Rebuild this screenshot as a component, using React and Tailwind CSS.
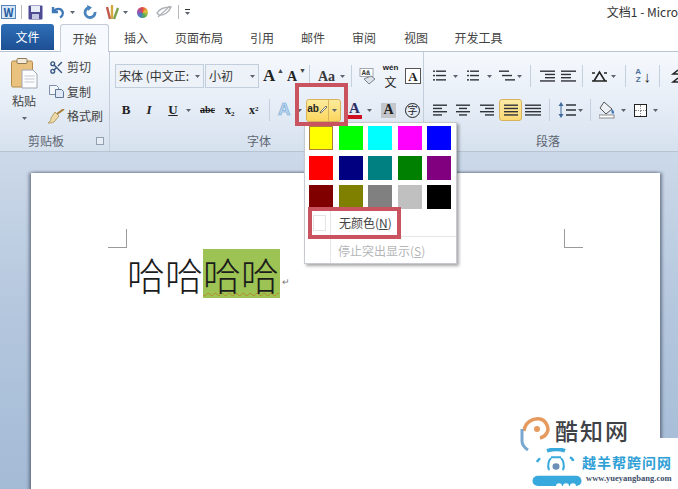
import React from 'react';
import { Scissors } from 'lucide-react';

const Caret = ({ className = '' }) => (
    <svg width="5" height="3" viewBox="0 0 5 3" className={'shrink-0 ' + className}>
        <path d="M0 0h5L2.5 3z" fill="#5b6470" />
    </svg>
);

const Sep = ({ h = 'h-[22px]', className = '' }) => <div className={'w-px shrink-0 bg-[#c5d0de] ' + h + ' ' + className} />;

// Horizontal text lines, used for the paragraph icons
const Lines = ({ rows, w = 14, h = 13 }) => (
    <svg width={w} height={h} viewBox={`0 0 ${w} ${h}`} className="shrink-0">
        {rows.map((r, i) => (
            <rect key={i} x={r[0]} y={i * (h / rows.length) + 0.5} width={r[1]} height="1.4" fill="#30343a" />
        ))}
    </svg>
);

const colors = [
    '#ffff00', '#00ff00', '#00ffff', '#ff00ff', '#0000ff',
    '#ff0000', '#000080', '#008080', '#008000', '#800080',
    '#800000', '#808000', '#808080', '#c0c0c0', '#000000',
];

const tabs = [
    ['插入', 'ml-[15px] w-[24px]'],
    ['页面布局', 'ml-[28px] w-[46px]'],
    ['引用', 'ml-[29px] w-[22px]'],
    ['邮件', 'ml-[29px] w-[22px]'],
    ['审阅', 'ml-[29px] w-[22px]'],
    ['视图', 'ml-[29px] w-[24px]'],
    ['开发工具', 'ml-[27px] w-[47px]'],
];

const QuickAccess = () => (
    <div className="flex h-[24px] shrink-0 items-center bg-white pl-[1px]">
        <div className="flex h-[14px] w-[15px] items-center justify-center border border-[#5d86b8] bg-[#d7e6f6] text-[11px] font-bold leading-none text-[#1f5aa0]">W</div>
        <div className="ml-[5px] h-[14px] w-px bg-[#b9b9b9]" />
        <svg width="15" height="15" viewBox="0 0 15 15" className="ml-[6px]">
            <rect x="0.5" y="0.5" width="14" height="14" rx="1" fill="#4f4a94" />
            <rect x="3" y="1" width="9" height="6" fill="#e8ecf5" />
            <rect x="4" y="9" width="7" height="5" fill="#c4c8de" />
        </svg>
        <svg width="15" height="14" viewBox="0 0 15 14" className="ml-[7px]">
            <path d="M3 2v5h5M3.5 6.5C6 3 11 3 12.5 6.5c1 2.5-.5 5-2.5 6" fill="none" stroke="#3f79b5" strokeWidth="2.4" />
        </svg>
        <Caret className="ml-[5px]" />
        <svg width="14" height="14" viewBox="0 0 14 14" className="ml-[8px]">
            <path d="M7 2.5A5 5 0 1 0 12 7" fill="none" stroke="#4a84bd" strokeWidth="2.8" />
            <path d="M4 0l5 2.5L5 6z" fill="#4a84bd" />
        </svg>
        <svg width="16" height="16" viewBox="0 0 16 16" className="ml-[7px]">
            <path d="M3 3l3 12" stroke="#c05a4a" strokeWidth="2.4" />
            <path d="M8 1v14" stroke="#d4a93f" strokeWidth="2.4" />
            <path d="M14 4l-4 11" stroke="#7fa34a" strokeWidth="2.4" />
        </svg>
        <Caret className="ml-[3px]" />
        <div className="ml-[9px] h-[11px] w-[11px] rounded-full bg-[conic-gradient(#e2483f,#e8c33c,#5fae4c,#3f7fc4,#a04fa8,#e2483f)]" />
        <svg width="16" height="14" viewBox="0 0 16 14" className="ml-[8px]">
            <path d="M1 8c3-5 9-6 14-6-2 5-7 9-12 8z" fill="none" stroke="#aeb2b6" strokeWidth="1.4" />
            <path d="M2 12L14 1" stroke="#aeb2b6" strokeWidth="1.2" />
        </svg>
        <div className="ml-[6px] h-[14px] w-px bg-[#b9b9b9]" />
        <div className="ml-[6px] flex flex-col items-center gap-[2px]">
            <div className="h-px w-[5px] bg-[#333]" />
            <Caret />
        </div>
        <span className="ml-auto whitespace-pre text-[12px] text-[#333]">文档1 - Micro</span>
    </div>
);

const TabStrip = () => (
    <div className="flex h-[27px] shrink-0 items-end bg-white text-[12px] text-[#444]">
        <div className="mb-[1px] ml-[1px] flex h-[26px] w-[53px] items-center justify-center rounded-t-[3px] bg-gradient-to-b from-[#2f6fb6] to-[#1d4f94] text-white">文件</div>
        <div className="relative z-10 -mb-[1px] ml-[6px] flex h-[28px] w-[49px] items-center justify-center rounded-t-[3px] border border-b-0 border-[#c3ccd8] bg-[#f6f9fd]">开始</div>
        {tabs.map(([label, cls]) => (
            <div key={label} className={'flex h-[26px] items-center justify-center whitespace-nowrap ' + cls}>{label}</div>
        ))}
    </div>
);

const SmallAction = ({ icon, label }) => (
    <div className="flex h-[24.5px] items-center">
        <div className="flex w-[17px] shrink-0 items-center justify-center">{icon}</div>
        <span className="ml-[2px] whitespace-nowrap text-[12px] text-[#444]">{label}</span>
    </div>
);

const Clipboard = () => (
    <div className="flex h-full w-[110px] shrink-0 flex-col border-r border-[#c3cedc]">
        <div className="flex h-[78px]">
            <div className="flex w-[48px] flex-col items-center pt-[6px]">
                <svg width="27" height="31" viewBox="0 0 27 31">
                    <rect x="0.5" y="3" width="21" height="26" rx="1.5" fill="#e9c27f" stroke="#b68a47" />
                    <rect x="6" y="0.5" width="10" height="5" rx="1" fill="#f4ead8" stroke="#8f7a58" />
                    <path d="M11 12h11l4 4v14H11z" fill="#fbfcfe" stroke="#a0a7b2" />
                    <path d="M13.500 18h10M13.500 21h10M13.500 24h10" stroke="#c3c8d0" />
                </svg>
                <span className="mt-[2px] text-[12px] leading-[20px] text-[#444]">粘贴</span>
                <Caret className="mt-[6px]" />
            </div>
            <div className="flex flex-col pt-[3px]">
                <SmallAction label="剪切" icon={<Scissors size={15} color="#35557f" strokeWidth={2.2} className="-scale-y-100" />} />
                <SmallAction label="复制" icon={
                    <svg width="15" height="13" viewBox="0 0 15 13">
                        <path d="M0.5 0.5h7l2 2v7h-9z" fill="#f2f5fa" stroke="#7d8ea6" />
                        <path d="M6.500 4.500h6l2 2v6h-8z" fill="#dfe8f4" stroke="#5e7698" />
                    </svg>
                } />
                <SmallAction label="格式刷" icon={
                    <svg width="17" height="15" viewBox="0 0 17 15">
                        <path d="M9 5L16 0" stroke="#a87f3a" strokeWidth="2" />
                        <path d="M7 3l4 4-5 6c-2 1-4 1-6 1 2-1 3-3 3-5z" fill="#ecd9a8" stroke="#a98d4e" strokeWidth="0.8" />
                    </svg>
                } />
            </div>
        </div>
        <div className="mt-auto flex h-[21px] items-center pl-[28px] pr-[5px]">
            <span className="text-[12px] text-[#5d6570]">剪贴板</span>
            <div className="ml-auto h-[8px] w-[8px] border border-[#94a0b0] bg-[#e7edf5]" />
        </div>
    </div>
);

const Select = ({ width, label, cls = '' }) => (
    <div className={'flex h-[24px] items-center border border-[#c3cedc] bg-[#edf2f8] px-[3px] ' + width + ' ' + cls}>
        <span className="flex-1 overflow-hidden whitespace-nowrap text-[12px] text-[#333]">{label}</span>
        <Caret />
    </div>
);

const FontGroup = () => (
    <div className="flex h-full w-[314px] shrink-0 flex-col border-r border-[#c3cedc] pl-[5px]">
        <div className="mt-[12px] flex h-[24px] items-center font-['Liberation_Serif','Noto_Sans_CJK_SC',serif]">
            <Select width="w-[89px]" label="宋体 (中文正:" cls="font-['Noto_Sans_CJK_SC',sans-serif]" />
            <Select width="w-[54px]" label="小初" cls="ml-px font-['Noto_Sans_CJK_SC',sans-serif]" />
            <span className="ml-[4px] w-[14px] text-[17px] font-bold text-[#222]">A</span>
            <span className="-mt-[9px] w-[4px] text-[7px] text-[#444]">▲</span>
            <span className="ml-[6px] w-[12px] text-[14px] font-bold text-[#222]">A</span>
            <span className="-mt-[9px] w-[4px] text-[7px] text-[#444]">▼</span>
            <Sep className="ml-[6px]" />
            <span className="ml-[8px] w-[20px] whitespace-nowrap text-[14px] font-bold text-[#3a3a3a]">Aa</span>
            <Caret className="ml-[2px]" />
            <Sep className="ml-[6px]" />
            <svg width="17" height="17" viewBox="0 0 17 17" className="ml-[7px]">
                <rect x="1" y="0.5" width="13" height="8" fill="#fff" stroke="#7d8694" strokeWidth="0.7" />
                <text x="2.500" y="7" fontSize="6.500" fontWeight="bold" fontFamily="Liberation Sans, sans-serif" fill="#333">Aā</text>
                <path d="M5 11l5 5 6-5-4-3z" fill="#dfe3e8" stroke="#79828f" />
            </svg>
            <div className="ml-[6px] flex w-[17px] flex-col items-center gap-[3px] text-[#222]">
                <span className="h-[8px] font-['Liberation_Sans',sans-serif] text-[8px] font-bold leading-[8px]">wén</span>
                <span className="h-[13px] font-['Noto_Sans_CJK_SC',sans-serif] text-[12px] leading-[13px]">文</span>
            </div>
            <div className="ml-[6px] flex h-[16px] w-[16px] items-center justify-center border border-[#555] bg-white text-[13px] font-bold leading-none text-[#222]">A</div>
        </div>
        <div className="mt-[10px] flex h-[24px] items-center font-['Liberation_Serif',serif] text-[#222]">
            <span className="ml-[6px] w-[10px] text-center text-[13px] font-bold">B</span>
            <span className="ml-[14px] w-[8px] text-center text-[13px] font-bold italic">I</span>
            <span className="ml-[15px] w-[10px] text-center text-[13px] font-bold underline">U</span>
            <Caret className="ml-[8px]" />
            <span className="ml-[8px] w-[17px] text-center text-[10px] font-bold leading-none line-through">abc</span>
            <span className="ml-[9px] w-[15px] text-[12px] font-bold">x<sub className="text-[7px]">2</sub></span>
            <span className="ml-[9px] w-[12px] text-[12px] font-bold">x<sup className="text-[7px]">2</sup></span>
            <Sep className="ml-[8px]" />
            <span className="ml-[8px] w-[16px] font-['Liberation_Sans',sans-serif] text-[17px] font-bold text-[#bcd6ee] [-webkit-text-stroke:0.6px_#6ea4d6]">A</span>
            <Caret className="ml-[3px]" />
            <div className="ml-[4px] flex h-[23px] w-[35px] rounded-[3px] border border-[#d9b35c] bg-gradient-to-b from-[#fdeb9b] to-[#fbd65c]">
                <div className="flex w-[22px] items-center justify-center border-r border-[#d9b35c]">
                    <span className="-mt-[3px] font-['Liberation_Sans',sans-serif] text-[10px] font-bold leading-none">ab</span>
                    <svg width="9" height="10" viewBox="0 0 9 10"><path d="M1 8l1-2 5-5 1 1-5 5z" fill="#fff" stroke="#444" strokeWidth="0.7" /></svg>
                </div>
                <div className="flex flex-1 items-center justify-center"><Caret /></div>
            </div>
            <div className="ml-[6px] flex w-[15px] flex-col items-center">
                <span className="text-[15px] font-bold leading-[14px] text-[#2b2f66]">A</span>
                <div className="h-[4px] w-[15px] bg-[#d01020]" />
            </div>
            <Caret className="ml-[5px]" />
            <div className="ml-[9px] flex h-[15px] w-[15px] items-center justify-center bg-[#c3c7cc] text-[14px] font-bold leading-none">A</div>
            <div className="ml-[9px] flex h-[15px] w-[15px] items-center justify-center rounded-full border border-[#222] font-['Noto_Sans_CJK_SC',sans-serif] text-[10px] leading-none">字</div>
        </div>
        <div className="mt-auto flex h-[21px] items-center justify-center pr-[20px]">
            <span className="font-['Noto_Sans_CJK_SC',sans-serif] text-[12px] text-[#5d6570]">字体</span>
        </div>
    </div>
);

const ParagraphGroup = () => (
    <div className="flex h-full flex-1 flex-col pl-[9px]">
        <div className="mt-[12px] flex h-[24px] items-center">
            <Lines rows={[[0, 2], [0, 2], [0, 2]]} w={3} h={13} />
            <Lines rows={[[0, 10], [0, 10], [0, 10]]} w={11} />
            <Caret className="ml-[6px]" />
            <div className="ml-[9px] flex"><Lines rows={[[0, 2], [0, 2], [0, 2]]} w={3} /><Lines rows={[[0, 9], [0, 9], [0, 9]]} w={10} /></div>
            <Caret className="ml-[7px]" />
            <div className="ml-[7px]"><Lines rows={[[0, 10], [3, 10], [6, 10]]} w={17} /></div>
            <Caret className="ml-[1px]" />
            <Sep className="ml-[8px]" />
            <div className="ml-[9px]"><Lines rows={[[0, 15], [5, 10], [5, 10], [0, 15]]} w={15} /></div>
            <div className="ml-[6px]"><Lines rows={[[0, 15], [0, 10], [0, 10], [0, 15]]} w={15} /></div>
            <Sep className="ml-[6px]" />
            <svg width="17" height="13" viewBox="0 0 17 13" className="ml-[8px]">
                <path d="M8.500 2L3 11h11zM1 11h15" fill="none" stroke="#222" strokeWidth="1.6" />
                <path d="M1 3h3M13 3h3" stroke="#222" strokeWidth="1.4" />
            </svg>
            <Caret className="ml-[3px]" />
            <Sep className="ml-[9px]" />
            <div className="ml-[8px] flex w-[17px] items-center">
                <div className="flex w-[9px] flex-col items-center font-['Liberation_Sans',sans-serif] text-[8px] font-bold leading-[8px] text-[#4d6f99]"><span>A</span><span>Z</span></div>
                <span className="ml-[1px] font-['Liberation_Sans',sans-serif] text-[15px] leading-none text-[#222]">↓</span>
            </div>
            <Sep className="ml-[8px]" />
            <svg width="10" height="15" viewBox="0 0 10 15" className="ml-[10px]">
                <path d="M8 1L3 5h7M8 9L3 13h7" fill="none" stroke="#222" strokeWidth="1.5" />
            </svg>
        </div>
        <div className="mt-[10px] flex h-[24px] items-center">
            <Lines rows={[[0, 14], [0, 9], [0, 14], [0, 9]]} />
            <div className="ml-[9px]"><Lines rows={[[0, 14], [3, 8], [0, 14], [3, 8]]} /></div>
            <div className="ml-[10px]"><Lines rows={[[0, 14], [5, 9], [0, 14], [5, 9]]} /></div>
            <div className="ml-[5px] flex h-[22px] w-[23px] items-center justify-center rounded-[3px] border border-[#d9b35c] bg-gradient-to-b from-[#fdeaa5] to-[#fbd972]">
                <Lines rows={[[0, 14], [0, 14], [0, 14], [0, 14]]} />
            </div>
            <div className="ml-[3px]"><Lines rows={[[0, 16], [0, 16], [0, 16], [0, 16]]} w={16} /></div>
            <Sep className="ml-[8px]" />
            <svg width="18" height="16" viewBox="0 0 18 16" className="ml-[8px]">
                <path d="M3 0L0.500 4h5zM3 16L0.500 12h5z" fill="#3f6a9c" />
                <path d="M3 4v8" stroke="#3f6a9c" />
                <path d="M8 3h10M8 8h10M8 13h10" stroke="#30343a" strokeWidth="1.4" />
            </svg>
            <Caret className="ml-[2px]" />
            <Sep className="ml-[7px]" />
            <svg width="16" height="18" viewBox="0 0 16 18" className="ml-[8px]">
                <path d="M5 1l8 7-6 5-6-6z" fill="#eef2f7" stroke="#555" />
                <path d="M13 8c2 2 3 4 1 5-2-1-2-3-1-5z" fill="#3f79b5" />
                <rect x="0" y="14" width="15" height="3" fill="#fff" stroke="#8b8b8b" />
            </svg>
            <Caret className="ml-[6px]" />
            <div className="ml-[8px] grid h-[13px] w-[13px] grid-cols-2 border-[1.5px] border-[#222] bg-white">
                <div className="border-b border-r border-dotted border-[#888]" />
                <div className="border-b border-dotted border-[#888]" />
                <div className="border-r border-dotted border-[#888]" />
            </div>
            <Caret className="ml-[6px]" />
        </div>
        <div className="mt-auto flex h-[21px] items-center pl-[103px]">
            <span className="text-[12px] text-[#5d6570]">段落</span>
        </div>
    </div>
);

const HighlightMenu = () => (
    <div className="absolute left-[304px] top-[122px] z-20 h-[142px] w-[153px] border border-[#c6c9cd] bg-white shadow-[2px_2px_3px_rgba(0,0,0,0.35)]">
        <div className="grid grid-cols-[repeat(5,24px)] gap-x-[5.5px] gap-y-[5.5px] pl-[4px] pt-[3px]">
            {colors.map((c, i) => (
                <div key={c} className={'h-[24px] w-[24px] ' + (i === 0 ? 'border border-[#a8803a]' : '')} style={{ backgroundColor: c }} />
            ))}
        </div>
        <div className="absolute bottom-0 left-[25px] top-[86px] w-px bg-[#e4e6e8]" />
        <div className="flex h-[27px] items-center">
            <div className="ml-[8px] h-[16px] w-[13px] border border-[#e2e4e6] bg-white" />
            <span className="ml-[13px] whitespace-nowrap text-[12px] text-[#444]">无颜色(<span className="underline">N</span>)</span>
        </div>
        <div className="ml-[26px] h-px bg-[#e4e6e8]" />
        <div className="flex h-[27px] items-center pl-[33px]">
            <span className="whitespace-nowrap text-[12px] text-[#b4b6b8]">停止突出显示(<span className="underline">S</span>)</span>
        </div>
    </div>
);

const Watermark = () => (
    <>
        <div className="absolute bottom-0 right-0 h-[51px] w-[148px] bg-white" />
        <svg width="34" height="36" viewBox="0 0 34 36" className="absolute left-[518px] top-[416px]">
            <path d="M6 15C7 6 15 2 22 3c5 1 8 6 8 11-1 4-4 7-8 8" fill="none" stroke="#e69a5e" strokeWidth="3.5" />
            <circle cx="19" cy="13" r="3" fill="#e69a5e" />
            <path d="M4 13v12c0 4 3 7 6 9" fill="none" stroke="#7aa7cf" strokeWidth="3" />
        </svg>
        <span className="absolute left-[555px] top-[414px] whitespace-nowrap text-[23px] font-medium leading-[32px] tracking-[2px] text-[#3f4247]">酷知网</span>
        <svg width="50" height="39" viewBox="0 0 50 42" preserveAspectRatio="none" className="absolute left-[532px] top-[448px]">
            <path d="M15 3c6-2 13-2 18 0" fill="none" stroke="#38a9dc" strokeWidth="4" />
            <path d="M8 11c-1 1-2 2-3 4M38 10c2 1 3 3 3 4" fill="none" stroke="#38a9dc" strokeWidth="2.500" />
            <path d="M17 24c-2-6 0-11 2-13M31 24c2-6 0-11-2-13M19 10h10" fill="none" stroke="#38a9dc" strokeWidth="2" />
            <circle cx="24" cy="20" r="3.500" fill="#6c8fb7" />
            <path d="M6 41a5.500 5.500 0 0 1 0-11h38a5.500 5.500 0 0 1 0 11z" fill="#38a9dc" />
            <circle cx="27" cy="41" r="3" fill="#fff" />
            <circle cx="34" cy="41" r="3" fill="#fff" />
            <circle cx="41" cy="41" r="3" fill="#fff" />
        </svg>
        <span className="absolute left-[582px] top-[452px] whitespace-nowrap text-[14px] font-bold leading-[20px] tracking-[1px] text-[#2f9fd6]">越羊帮跨问网</span>
        <span className="absolute left-[586px] top-[472px] whitespace-nowrap font-['Liberation_Serif',serif] text-[8.5px] font-bold leading-[12px] text-[#3e4f6b]">www.yueyangbang.com</span>
    </>
);

const Page = () => (
    <div className="min-h-0 flex-1 overflow-hidden bg-gradient-to-b from-[#ccd9e9] via-[#b3c6dd] to-[#a4bbd6] px-[31px] pt-[21px]">
        <div className="h-[320px] w-[629px] bg-white px-[77px] pt-[56px] shadow-[-2px_0_3px_rgba(70,80,100,0.65),2px_0_3px_rgba(70,80,100,0.65)]">
            <div className="flex justify-between">
                <div className="h-[19px] w-[19px] border-b border-r border-[#9b9b9b]" />
                <div className="ml-[18px] h-[19px] w-[19px] border-b border-l border-[#9b9b9b]" />
            </div>
            <div className="mt-[1px] flex h-[49px] items-center pl-[19px] font-['Noto_Sans_CJK_SC',sans-serif] text-[38px] font-light leading-none text-[#1b1b1b]">
                <span>哈哈</span>
                <span className="flex h-[49px] w-[77px] items-center bg-[#9cc354] underline decoration-[#b7862b] decoration-wavy decoration-1 underline-offset-[2px]">哈哈</span>
                <span className="ml-[2px] mt-[16px] text-[9px] text-[#777]">↵</span>
            </div>
        </div>
    </div>
);

export default function App() {
    return (
        <div className="relative flex h-[489px] w-[678px] flex-col overflow-hidden bg-white font-['Noto_Sans_CJK_SC',sans-serif]">
            <QuickAccess />
            <TabStrip />
            <div className="flex h-[101px] shrink-0 border-y border-[#b8c4d4] bg-gradient-to-b from-[#f6f9fd] via-[#e7eef7] to-[#d6e1ee]">
                <Clipboard />
                <FontGroup />
                <ParagraphGroup />
            </div>
            <Page />
            {/* Red marks over the button and the menu item */}
            <HighlightMenu />
            <div className="absolute left-[295px] top-[83px] z-30 h-[43px] w-[53px] border-[4px] border-[#c9535e]" />
            <div className="absolute left-[308px] top-[207px] z-30 h-[32px] w-[93px] border-[4px] border-[#c9535e]" />
            <Watermark />
        </div>
    );
}
